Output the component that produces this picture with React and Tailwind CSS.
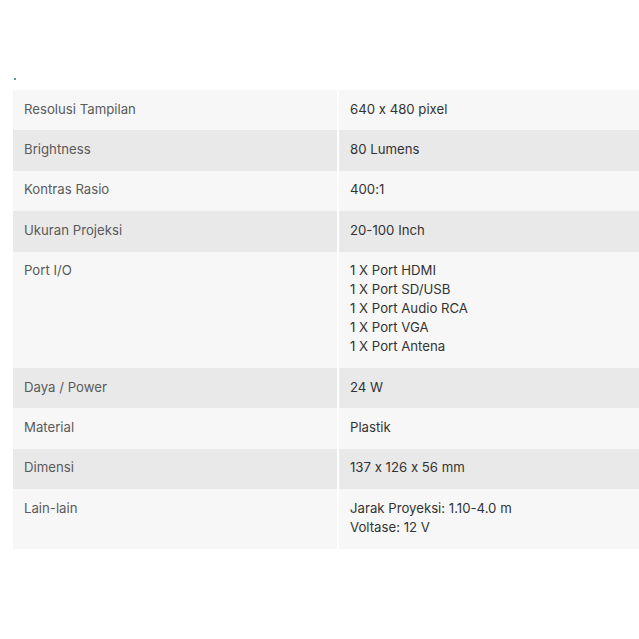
import React from 'react';

const specs = [
    { label: 'Resolusi Tampilan', value: ['640 x 480 pixel'] },
    { label: 'Brightness', value: ['80 Lumens'] },
    { label: 'Kontras Rasio', value: ['400:1'] },
    { label: 'Ukuran Projeksi', value: ['20-100 Inch'] },
    {
        label: 'Port I/O',
        value: ['1 X Port HDMI', '1 X Port SD/USB', '1 X Port Audio RCA', '1 X Port VGA', '1 X Port Antena'],
    },
    { label: 'Daya / Power', value: ['24 W'] },
    { label: 'Material', value: ['Plastik'] },
    { label: 'Dimensi', value: ['137 x 126 x 56 mm'] },
    { label: 'Lain-lain', value: ['Jarak Proyeksi: 1.10-4.0 m', 'Voltase: 12 V'] },
];

const App = () => {
    return (
        <div className="min-h-[639px] bg-white pt-[78px] pl-[13px] font-['Inter','Noto_Sans',sans-serif] [font-feature-settings:'calt'_0]">
            <div className="w-[2px] h-[2px] ml-[1px] mb-[10px] rounded-full bg-[#2b7a78]"></div>
            <div className="flex flex-col text-[13.2px] leading-[19px]">
                {specs.map((row, i) => (
                    <div key={row.label} className={`flex ${i % 2 === 0 ? 'bg-[#f7f7f7]' : 'bg-[#e9e9e9]'}`}>
                        <div className="w-[324px] shrink-0 pl-[11px] pt-[9.6px] pb-[11.8px] text-[#5a5a5a]">{row.label}</div>
                        <div className="w-[2px] shrink-0 bg-white"></div>
                        <div className="flex-1 pl-[11px] pt-[9.6px] pb-[11.8px] text-[#333333]">
                            {row.value.map((v) => (
                                <div key={v}>{v}</div>
                            ))}
                        </div>
                    </div>
                ))}
            </div>
        </div>
    );
};

export default App;
